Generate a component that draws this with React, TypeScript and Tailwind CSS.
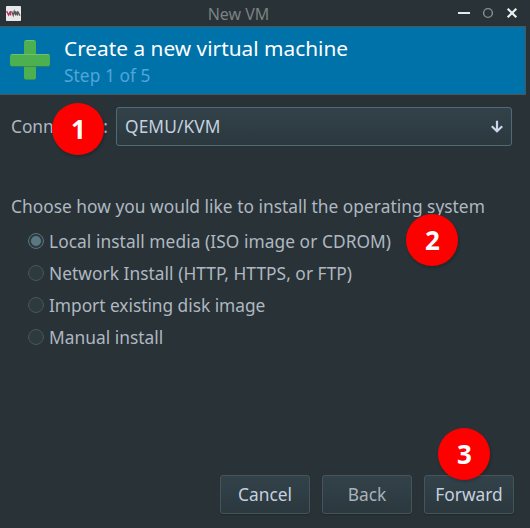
import React from 'react';

const options = [
  { label: 'Local install media (ISO image or CDROM)', tracking: 'tracking-[0.06px]' },
  { label: 'Network Install (HTTP, HTTPS, or FTP)', tracking: 'tracking-[0.04px]' },
  { label: 'Import existing disk image', tracking: 'tracking-[-0.03px]' },
  { label: 'Manual install', tracking: 'tracking-[0.02px]' },
];

function AppIcon() {
  return (
    <svg width="15" height="15" viewBox="0 0 15 15" className="mt-px ml-[6px]">
      <rect width="15" height="15" rx="0.8" fill="#e8e8e8" />
      <path d="M0.6 5.2 2.6 9 4.5 5.2V9.6" fill="none" stroke="#b8335f" strokeWidth="1.4" />
      <path d="M5.6 5.2 7.2 9.4 8.2 5.2 9.6 9.4V5.2L11.6 9.4V5.2L14 9.6" fill="none" stroke="#555" strokeWidth="1.2" />
    </svg>
  );
}

function PlusIcon() {
  return (
    <svg width="42" height="42" viewBox="0 0 42 42" className="mt-[12px] ml-[9px] shrink-0">
      <rect x="15" y="1.8" width="12" height="39.4" rx="2" fill="#1d7a68" />
      <rect x="15" y="1" width="12" height="39.5" rx="2" fill="#4caf50" />
      <path d="M17 1.5H25" stroke="#70bf73" />
      <rect x="1" y="16" width="40" height="11.8" rx="2" fill="#388344" />
      <rect x="1" y="15" width="40" height="12" rx="2" fill="#4caf50" />
      <path d="M2.5 15.5H39.5" stroke="#70bf73" />
    </svg>
  );
}

function WindowControls() {
  return (
    <svg width="62" height="26" viewBox="0 0 62 26">
      <path d="M0 13H12" stroke="#e6e9ea" strokeWidth="2" />
      <circle cx="30" cy="13" r="4.4" fill="none" stroke="#8a9194" strokeWidth="1.4" />
      <path d="M49.7 8.7 58.3 17.3M58.3 8.7 49.7 17.3" stroke="#eef0f0" strokeWidth="2.2" />
    </svg>
  );
}

function Radio({ label, tracking, checked }: { label: string; tracking: string; checked: boolean }) {
  return (
    <label className="flex h-8 items-center">
      <span
        className={`flex size-4 shrink-0 items-center justify-center rounded-full border bg-[#2d3b41] ${
          checked ? 'border-[#58747e]' : 'border-[#48555b]'
        }`}
      >
        {checked && <span className="size-[10px] rounded-full bg-[#5b7882]" />}
      </span>
      <span className={`ml-[5px] whitespace-nowrap ${tracking}`}>{label}</span>
    </label>
  );
}

function Badge({ n, place }: { n: number; place: string }) {
  return (
    <div
      className={`absolute flex size-[52px] items-center justify-center rounded-full bg-[#fe0000] text-[26px] font-bold text-white shadow-[1px_2px_3px_rgba(0,0,0,0.2)] ${place}`}
    >
      {n}
    </div>
  );
}

const button =
  'h-[39px] w-[90px] rounded-[3px] border border-[#46545b] bg-linear-to-b from-[#33424a] to-[#2b383e] leading-none shadow-[0_1px_1px_rgba(0,0,0,0.2)]';

export default function App() {
  return (
    <div className="relative flex h-[528px] w-[530px] flex-col overflow-hidden bg-[#283237] font-['Noto_Sans',sans-serif] text-[17.33px] leading-6 text-[#afb8c1]">
      <header className="grid h-[26px] shrink-0 grid-cols-[1fr_auto_1fr] items-center">
        <AppIcon />
        <h1 className="mt-[2px] mr-[53px] text-[16px] text-[#7c8183]">New VM</h1>
        <div className="flex justify-end pr-[10px]">
          <WindowControls />
        </div>
      </header>
      <section className="flex h-[69px] w-[526px] shrink-0 border-y border-r border-[#4c5558] bg-[#0072aa]">
        <PlusIcon />
        <div className="ml-[13px] pt-[8px]">
          <h2 className="text-[20.8px] leading-[26px] tracking-[0.02px] whitespace-nowrap text-white">Create a new virtual machine</h2>
          <p className="mt-[2px] leading-6 tracking-[0.04px] text-[#50a6d8]">Step 1 of 5</p>
        </div>
      </section>
      <main className="flex w-[526px] grow flex-col">
        <div className="mt-3 flex items-center pl-[11px]">
          <span className="w-[105px] pb-[2px] tracking-[-0.05px]">Connection:</span>
          <button className="flex h-[39px] w-[396px] items-center justify-between rounded-[3px] border border-[#506b74] bg-linear-to-b from-[#33424a] to-[#2b383e] pr-2 pl-2 text-[#c5d0df]">
            <span className="pb-[2px] tracking-[0.1px]">QEMU/KVM</span>
            <svg width="12" height="14" viewBox="0 0 12 14" fill="none" stroke="#cbd6e8" strokeWidth="2.2">
              <path d="M6 0.8V12M0.8 6.2 6 11.2 11.2 6.2" />
            </svg>
          </button>
        </div>
        <p className="mt-12 pl-[11px] tracking-[0.02px] whitespace-nowrap">Choose how you would like to install the operating system</p>
        <div className="mt-[7px] pl-7">
          {options.map((option, i) => (
            <Radio key={option.label} {...option} checked={i === 0} />
          ))}
        </div>
        <footer className="mt-auto mb-[14px] flex justify-end gap-3 pr-3 text-[#c5d0df]">
          <button className={button}>Cancel</button>
          <button className={`${button} text-[#a9b1b9]`}>Back</button>
          <button className={button}>Forward</button>
        </footer>
      </main>
      <Badge n={1} place="left-[52.4px] top-[103.4px]" />
      <Badge n={2} place="left-[406.4px] top-[214.4px]" />
      <Badge n={3} place="left-[438.4px] top-[428.4px]" />
    </div>
  );
}
